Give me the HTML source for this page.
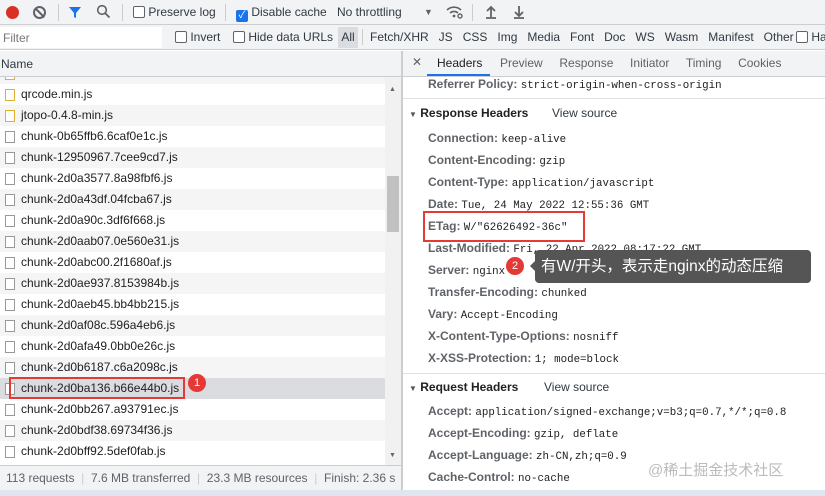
<!DOCTYPE html><html><head><meta charset="utf-8"><style>
*{margin:0;padding:0;box-sizing:border-box}
body{width:825px;height:496px;overflow:hidden;background:#fff;font-family:"Segoe UI","Liberation Sans","Noto Sans CJK SC",sans-serif;font-size:12px;color:#303942;position:relative}
.abs{position:absolute;white-space:nowrap}
.tb{top:0;left:0;width:825px;height:25px;background:#f1f3f4;border-bottom:1px solid #cbcdd1}
.fb{top:25px;left:0;width:825px;height:25px;background:#f1f3f4;border-bottom:1px solid #cbcdd1}
.cb{display:inline-block;width:12px;height:12px;border:1px solid #5f6368;border-radius:2px;vertical-align:-2px;background:#fff}
.row{position:absolute;left:0;width:385px;height:21px;line-height:21px;padding-left:21px;font-size:12px;color:#202124}
.row .ic{position:absolute;left:5px;top:5px;width:10px;height:12px;border:1px solid #999;background:#fff}
.row .ic.y{border-color:#e0b030}
.hl{position:absolute;left:428px;font-size:12px;color:#202124}
.hl b{font-weight:bold;color:#5f6368}
.hl span{font-family:"Liberation Mono","DejaVu Sans Mono",monospace;font-size:10.8px}
</style></head><body>
<div class="abs tb"></div>
<div class="abs" style="left:6px;top:6px;width:13px;height:13px;border-radius:50%;background:#d93025"></div>
<div class="abs" style="left:33px;top:6px;width:13px;height:13px;border-radius:50%;border:2px solid #5f6368"><div style="position:absolute;left:4px;top:-1px;width:2px;height:12px;background:#5f6368;transform:rotate(-45deg)"></div></div>
<div class="abs" style="left:58px;top:4px;height:17px;border-left:1px solid #ccc"></div>
<svg class="abs" style="left:68px;top:5px" width="14" height="14"><path d="M1 2h12l-5 6v5l-2-1V8z" fill="#1a73e8"/></svg>
<svg class="abs" style="left:96px;top:4px" width="15" height="15"><circle cx="6" cy="6" r="4.3" fill="none" stroke="#5f6368" stroke-width="1.6"/><path d="M9 9l4.5 4.5" stroke="#5f6368" stroke-width="1.8"/></svg>
<div class="abs" style="left:122px;top:4px;height:17px;border-left:1px solid #ccc"></div>
<div class="abs" style="left:133px;top:4px;line-height:16px"><span class="cb"></span> Preserve log</div>
<div class="abs" style="left:225px;top:4px;height:17px;border-left:1px solid #ccc"></div>
<div class="abs" style="left:236px;top:4px;line-height:16px"><span class="cb" style="background:#1a73e8;border-color:#1a73e8;color:#fff;font-size:10px;line-height:10px;text-align:center">✓</span> Disable cache</div>
<div class="abs" style="left:337px;top:4px;line-height:16px">No throttling</div>
<div class="abs" style="left:424px;top:4px;line-height:16px;font-size:9px;color:#5f6368">▼</div>
<svg class="abs" style="left:446px;top:4px" width="18" height="16"><path d="M1 6a10 10 0 0 1 14 0M4 9a6 6 0 0 1 8 0" fill="none" stroke="#5f6368" stroke-width="1.6"/><circle cx="8" cy="12" r="1.4" fill="#5f6368"/><circle cx="14" cy="12" r="2" fill="none" stroke="#5f6368" stroke-width="1.4"/></svg>
<div class="abs" style="left:472px;top:4px;height:17px;border-left:1px solid #ccc"></div>
<svg class="abs" style="left:484px;top:4px" width="14" height="16"><path d="M7 3v10M3 7l4-4 4 4M2 14h10" fill="none" stroke="#5f6368" stroke-width="1.8"/></svg>
<svg class="abs" style="left:512px;top:4px" width="14" height="16"><path d="M7 2v10M3 8l4 4 4-4M2 14h10" fill="none" stroke="#5f6368" stroke-width="1.8"/></svg>
<div class="abs fb"></div>
<div class="abs" style="left:0;top:27px;width:162px;height:21px;background:#fff;padding:4px 3px;color:#777">Filter</div>
<div class="abs" style="left:175px;top:29px;line-height:16px"><span class="cb"></span> Invert</div>
<div class="abs" style="left:233px;top:29px;line-height:16px"><span class="cb"></span> Hide data URLs</div>
<div class="abs" style="left:338px;top:27px;width:20px;height:21px;background:#dadce0;line-height:21px;text-align:center">All</div>
<div class="abs" style="left:362px;top:29px;height:16px;border-left:1px solid #ccc"></div>
<div class="abs" style="left:370px;top:29px;line-height:16px;word-spacing:0">Fetch/XHR&nbsp;&nbsp; JS&nbsp;&nbsp; CSS&nbsp;&nbsp; Img&nbsp;&nbsp; Media&nbsp;&nbsp; Font&nbsp;&nbsp; Doc&nbsp;&nbsp; WS&nbsp;&nbsp; Wasm&nbsp;&nbsp; Manifest&nbsp;&nbsp; Other</div>
<div class="abs" style="left:796px;top:29px;line-height:16px"><span class="cb"></span> Ha</div>
<!-- left panel -->
<div class="abs" style="left:0;top:51px;width:401px;height:26px;background:#f1f3f4;border-bottom:1px solid #cbcdd1;line-height:26px;padding-left:1px">Name</div>
<div class="abs" style="left:0;top:77px;width:385px;height:388px;background:#fff;overflow:hidden">
<div class="row" style="top:-14px;background:#f5f5f5"><div class="ic y"></div></div>
<div class="row" style="top:7px"><div class="ic y"></div>qrcode.min.js</div>
<div class="row" style="top:28px;background:#f5f5f5"><div class="ic y"></div>jtopo-0.4.8-min.js</div>
<div class="row" style="top:49px"><div class="ic"></div>chunk-0b65ffb6.6caf0e1c.js</div>
<div class="row" style="top:70px;background:#f5f5f5"><div class="ic"></div>chunk-12950967.7cee9cd7.js</div>
<div class="row" style="top:91px"><div class="ic"></div>chunk-2d0a3577.8a98fbf6.js</div>
<div class="row" style="top:112px;background:#f5f5f5"><div class="ic"></div>chunk-2d0a43df.04fcba67.js</div>
<div class="row" style="top:133px"><div class="ic"></div>chunk-2d0a90c.3df6f668.js</div>
<div class="row" style="top:154px;background:#f5f5f5"><div class="ic"></div>chunk-2d0aab07.0e560e31.js</div>
<div class="row" style="top:175px"><div class="ic"></div>chunk-2d0abc00.2f1680af.js</div>
<div class="row" style="top:196px;background:#f5f5f5"><div class="ic"></div>chunk-2d0ae937.8153984b.js</div>
<div class="row" style="top:217px"><div class="ic"></div>chunk-2d0aeb45.bb4bb215.js</div>
<div class="row" style="top:238px;background:#f5f5f5"><div class="ic"></div>chunk-2d0af08c.596a4eb6.js</div>
<div class="row" style="top:259px"><div class="ic"></div>chunk-2d0afa49.0bb0e26c.js</div>
<div class="row" style="top:280px;background:#f5f5f5"><div class="ic"></div>chunk-2d0b6187.c6a2098c.js</div>
<div class="row" style="top:301px;background:#dadce0"><div class="ic"></div>chunk-2d0ba136.b66e44b0.js</div>
<div class="row" style="top:322px"><div class="ic"></div>chunk-2d0bb267.a93791ec.js</div>
<div class="row" style="top:343px;background:#f5f5f5"><div class="ic"></div>chunk-2d0bdf38.69734f36.js</div>
<div class="row" style="top:364px"><div class="ic"></div>chunk-2d0bff92.5def0fab.js</div>
</div>
<div class="abs" style="left:9px;top:377px;width:176px;height:22px;border:2px solid #e53935"></div>
<div class="abs" style="left:188px;top:374px;width:18px;height:18px;border-radius:50%;background:#e53935;color:#fff;font-size:11px;text-align:center;line-height:18px">1</div>
<div class="abs" style="left:385px;top:77px;width:16px;height:388px;background:#f1f1f1"></div>
<div class="abs" style="left:387px;top:176px;width:12px;height:56px;background:#c1c1c1"></div>
<div class="abs" style="left:389px;top:86px;font-size:7px;color:#666">▲</div>
<div class="abs" style="left:389px;top:452px;font-size:7px;color:#666">▼</div>
<div class="abs" style="left:0;top:465px;width:401px;height:25px;background:#f1f3f4;border-top:1px solid #cbcdd1;line-height:25px;padding-left:6px;color:#5f6368">113 requests <span style="color:#ccc">&nbsp;|&nbsp;</span> 7.6 MB transferred <span style="color:#ccc">&nbsp;|&nbsp;</span> 23.3 MB resources <span style="color:#ccc">&nbsp;|&nbsp;</span> Finish: 2.36 s</div>
<div class="abs" style="left:0;top:490px;width:825px;height:6px;background:#dfe6f0"></div>
<!-- right panel -->
<div class="abs" style="left:401px;top:51px;width:2px;height:439px;background:#cbcdd1"></div>
<div class="abs" style="left:403px;top:51px;width:422px;height:26px;background:#f1f3f4;border-bottom:1px solid #cbcdd1"></div>
<div class="abs" style="left:412px;top:55px;font-size:12px;color:#5f6368">✕</div>
<div class="abs" style="left:437px;top:56px;color:#202124">Headers</div>
<div class="abs" style="left:427px;top:74px;width:63px;height:2px;background:#1a73e8"></div>
<div class="abs" style="left:500px;top:56px;color:#5f6368;word-spacing:0">Preview&nbsp;&nbsp;&nbsp;&nbsp; Response&nbsp;&nbsp;&nbsp;&nbsp; Initiator&nbsp;&nbsp;&nbsp;&nbsp; Timing&nbsp;&nbsp;&nbsp;&nbsp; Cookies</div>
<div class="hl" style="top:77px"><b>Referrer Policy:</b> <span>strict-origin-when-cross-origin</span></div>
<div class="abs" style="left:403px;top:98px;width:422px;border-top:1px solid #e0e0e0"></div>
<div class="abs" style="left:409px;top:106px;color:#202124"><span style="font-size:8px;color:#555">▼</span> <b>Response Headers</b></div>
<div class="abs" style="left:552px;top:106px;color:#303942">View source</div>
<div class="hl" style="top:131px"><b>Connection:</b> <span>keep-alive</span></div>
<div class="hl" style="top:153px"><b>Content-Encoding:</b> <span>gzip</span></div>
<div class="hl" style="top:175px"><b>Content-Type:</b> <span>application/javascript</span></div>
<div class="hl" style="top:197px"><b>Date:</b> <span>Tue, 24 May 2022 12:55:36 GMT</span></div>
<div class="hl" style="top:219px"><b>ETag:</b> <span>W/"62626492-36c"</span></div>
<div class="hl" style="top:241px"><b>Last-Modified:</b> <span>Fri, 22 Apr 2022 08:17:22 GMT</span></div>
<div class="hl" style="top:263px"><b>Server:</b> <span>nginx</span></div>
<div class="hl" style="top:285px"><b>Transfer-Encoding:</b> <span>chunked</span></div>
<div class="hl" style="top:307px"><b>Vary:</b> <span>Accept-Encoding</span></div>
<div class="hl" style="top:329px"><b>X-Content-Type-Options:</b> <span>nosniff</span></div>
<div class="hl" style="top:351px"><b>X-XSS-Protection:</b> <span>1; mode=block</span></div>
<div class="abs" style="left:403px;top:373px;width:422px;border-top:1px solid #e0e0e0"></div>
<div class="abs" style="left:409px;top:380px;color:#202124"><span style="font-size:8px;color:#555">▼</span> <b>Request Headers</b></div>
<div class="abs" style="left:544px;top:380px">View source</div>
<div class="hl" style="top:404px"><b>Accept:</b> <span>application/signed-exchange;v=b3;q=0.7,*/*;q=0.8</span></div>
<div class="hl" style="top:426px"><b>Accept-Encoding:</b> <span>gzip, deflate</span></div>
<div class="hl" style="top:448px"><b>Accept-Language:</b> <span>zh-CN,zh;q=0.9</span></div>
<div class="hl" style="top:470px"><b>Cache-Control:</b> <span>no-cache</span></div>
<div class="abs" style="left:423px;top:211px;width:162px;height:31px;border:2px solid #e53935"></div>
<div class="abs" style="left:506px;top:257px;width:18px;height:18px;border-radius:50%;background:#e53935;color:#fff;font-size:11px;text-align:center;line-height:18px">2</div>
<div class="abs" style="left:524px;top:260px;width:0;height:0;border:6px solid transparent;border-right-color:#555"></div>
<div class="abs" style="left:535px;top:250px;width:276px;height:33px;background:#555;border-radius:4px;color:#fff;font-size:15.5px;line-height:33px;padding-left:6px">有W/开头，表示走nginx的动态压缩</div>
<div class="abs" style="left:648px;top:459px;color:#bbb;font-size:15px">@稀土掘金技术社区</div>
</body></html>
